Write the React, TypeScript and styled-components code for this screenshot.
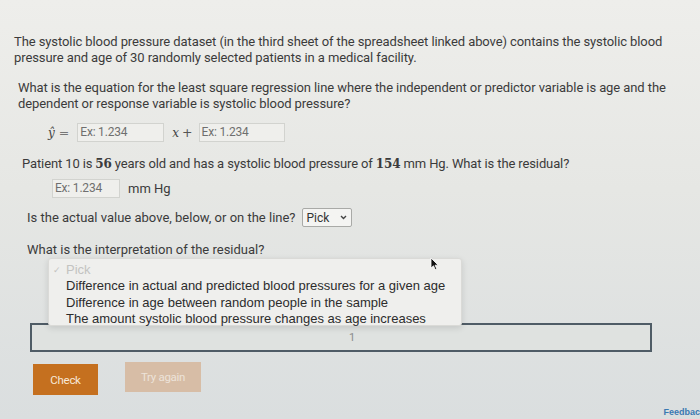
import * as React from 'react'
import styled, { createGlobalStyle } from 'styled-components'

const GlobalStyle = createGlobalStyle`
  html, body {
    margin: 0;
    padding: 0;
  }
  body {
    font-family: Roboto, "Liberation Sans", sans-serif;
    color: #3b3b3b;
  }
`

const Page = styled.div`
  position: relative;
  width: 700px;
  height: 419px;
  overflow: hidden;
  box-sizing: border-box;
  padding: 34px 0 0 14px;
  background: linear-gradient(180deg, #eeeeeb 0%, #e6e7e4 45%, #dadedf 100%);
`

const Para = styled.p<{ indent?: number; top?: number }>`
  margin: ${props => props.top || 0}px 0 0 ${props => props.indent || 0}px;
  font-size: 13px;
  line-height: 16px;
  letter-spacing: -0.09px;
  white-space: nowrap;
`

const Row = styled.div<{ indent: number; top: number; tight?: boolean }>`
  display: flex;
  align-items: center;
  margin: ${props => props.top}px 0 0 ${props => props.indent}px;
  font-size: 13px;
  letter-spacing: ${props => (props.tight ? -0.12 : 0)}px;
  white-space: nowrap;
`

const MathSym = styled.span<{ gap?: number }>`
  font-family: "DejaVu Serif", "Liberation Serif", serif;
  font-style: italic;
  font-size: 12px;
  color: #444;
  margin-right: ${props => props.gap || 0}px;
`

const Op = styled.span`
  font-family: "DejaVu Sans", sans-serif;
  color: #777;
  font-size: 12.5px;
  margin: 0 8px 0 4px;
`

const NumInput = styled.div<{ width: number }>`
  width: ${props => props.width}px;
  height: 19px;
  box-sizing: border-box;
  border: 1px solid #d2d3cf;
  background: #efefec;
  color: #6f6f6f;
  font-size: 12px;
  letter-spacing: -0.2px;
  line-height: 17px;
  padding-left: 2px;
`

const Bold = styled.span`
  font-family: "DejaVu Serif", "Liberation Serif", serif;
  font-weight: bold;
  font-size: 12px;
  margin: 0 3px;
`

const Unit = styled.span`
  margin-left: 8px;
  font-size: 13px;
`

const Select = styled.div`
  display: flex;
  align-items: center;
  justify-content: space-between;
  width: 50px;
  height: 19px;
  box-sizing: border-box;
  margin-left: 6px;
  padding: 0 4px 0 4px;
  border: 1px solid #a9aaa7;
  border-radius: 2px;
  background: #f4f4f2;
  font-size: 12px;
  color: #333;
`

const Chevron = () => (
  <svg width="7" height="5" viewBox="0 0 7 5">
    <path d="M1 1 L3.5 3.5 L6 1" fill="none" stroke="#444" strokeWidth="1.4" />
  </svg>
)

const SelectSlot = styled.div`
  position: relative;
  height: 66px;
`

const Menu = styled.div`
  position: absolute;
  z-index: 2;
  left: 34px;
  top: 1px;
  width: 414px;
  height: 68px;
  box-sizing: border-box;
  padding-top: 3px;
  background: #efefed;
  border: 1px solid #dadad7;
  border-radius: 3px;
  box-shadow: 0 2px 6px rgba(0, 0, 0, 0.12);
  font-family: "Liberation Sans", Arial, sans-serif;
  font-size: 13px;
  color: #2c2c2c;
`

const MenuItem = styled.div<{ muted?: boolean }>`
  position: relative;
  height: 16.4px;
  line-height: 16.4px;
  padding-left: 17px;
  color: ${props => (props.muted ? '#c3c3c1' : '#2c2c2c')};
`

const Check = styled.span`
  position: absolute;
  left: 4px;
  font-size: 9px;
  color: #c3c3c1;
`

const Cursor = styled.svg`
  position: absolute;
  z-index: 3;
  left: 430px;
  top: 257px;
`

const AnswerBox = styled.div`
  margin-left: 16px;
  width: 622px;
  height: 29px;
  box-sizing: border-box;
  border: 2px solid #4f5c66;
  background: #dfe2e0;
  font-size: 11px;
  color: #8a8c8c;
  text-align: center;
  line-height: 25px;
  padding-left: 22px;
`

const Buttons = styled.div`
  display: flex;
  align-items: flex-start;
  gap: 27px;
  margin: 12px 0 0 19px;
`

const Button = styled.div<{ disabled?: boolean }>`
  display: flex;
  align-items: center;
  justify-content: center;
  width: ${props => (props.disabled ? 76 : 65)}px;
  height: ${props => (props.disabled ? 30 : 31)}px;
  margin-top: ${props => (props.disabled ? -2 : 0)}px;
  background: ${props => (props.disabled ? '#d7bda6' : '#c5701f')};
  color: ${props => (props.disabled ? '#ede3d9' : '#f7e8d8')};
  font-size: 11.5px;
  letter-spacing: -0.3px;
`

const Feedback = styled.span`
  position: absolute;
  right: 0;
  bottom: 2px;
  font-family: "Liberation Sans", Arial, sans-serif;
  font-weight: bold;
  font-size: 9px;
  color: #3a79b2;
`

const App = () => {
  return (
    <Page>
      <GlobalStyle />
      <Para>
        The systolic blood pressure dataset (in the third sheet of the spreadsheet linked above) contains the systolic blood
        <br />
        pressure and age of 30 randomly selected patients in a medical facility.
      </Para>
      <Para indent={4} top={14}>
        What is the equation for the least square regression line where the independent or predictor variable is age and the
        <br />
        dependent or response variable is systolic blood pressure?
      </Para>
      <Row indent={34} top={11}>
        <MathSym>ŷ</MathSym>
        <Op>=</Op>
        <NumInput width={87}>Ex: 1.234</NumInput>
        <MathSym style={{ marginLeft: 8 }}>x</MathSym>
        <Op style={{ margin: '0 6px 0 3px', color: '#555' }}>+</Op>
        <NumInput width={86}>Ex: 1.234</NumInput>
      </Row>
      <Row indent={8} top={14} tight>
        Patient 10 is<Bold>56</Bold>years old and has a systolic blood pressure of<Bold>154</Bold>mm Hg. What is the residual?
      </Row>
      <Row indent={38} top={8}>
        <NumInput width={68}>Ex: 1.234</NumInput>
        <Unit>mm Hg</Unit>
      </Row>
      <Row indent={13} top={10}>
        Is the actual value above, below, or on the line?
        <Select>
          Pick
          <Chevron />
        </Select>
      </Row>
      <Row indent={13} top={15}>
        What is the interpretation of the residual?
      </Row>
      <SelectSlot>
        <Menu>
          <MenuItem muted>
            <Check>✓</Check>Pick
          </MenuItem>
          <MenuItem>Difference in actual and predicted blood pressures for a given age</MenuItem>
          <MenuItem>Difference in age between random people in the sample</MenuItem>
          <MenuItem>The amount systolic blood pressure changes as age increases</MenuItem>
        </Menu>
      </SelectSlot>
      <AnswerBox>1</AnswerBox>
      <Buttons>
        <Button>Check</Button>
        <Button disabled>Try again</Button>
      </Buttons>
      <Cursor width="9" height="14" viewBox="0 0 9 14">
        <path d="M1 1 L1 11 L3.5 8.8 L5.2 12.6 L6.8 11.9 L5.1 8.2 L8.2 8.2 Z" fill="#111" stroke="#fff" strokeWidth="0.8" />
      </Cursor>
      <Feedback>Feedbac</Feedback>
    </Page>
  )
}

export default App
